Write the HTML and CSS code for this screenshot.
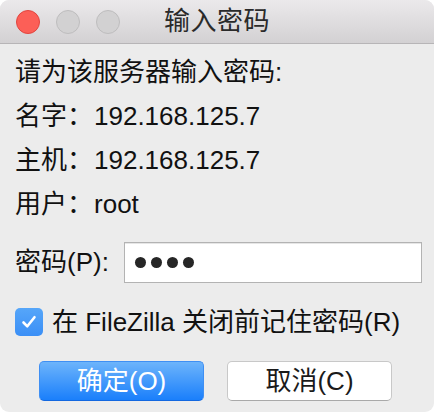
FILE: index.html
```html
<!DOCTYPE html>
<html lang="zh-CN">
<head>
<meta charset="utf-8">
<title>输入密码</title>
<link rel="stylesheet" href="styles.css">
</head>
<body>
<div class="window">
  <div class="titlebar">
    <div class="lights">
      <span class="light close"></span>
      <span class="light idle"></span>
      <span class="light idle"></span>
    </div>
    <div class="title">输入密码</div>
    <div class="spacer"></div>
  </div>
  <div class="content">
    <div class="row">请为该服务器输入密码:</div>
    <div class="row">名字：<span class="val">192.168.125.7</span></div>
    <div class="row">主机：<span class="val">192.168.125.7</span></div>
    <div class="row">用户：<span class="val">root</span></div>
    <div class="pwrow">
      <span class="pwlabel">密码(P):</span>
      <div class="input">
        <span class="dot"></span><span class="dot"></span><span class="dot"></span><span class="dot"></span>
      </div>
    </div>
    <div class="checkrow">
      <span class="checkbox">
        <svg width="18" height="18" viewBox="0 0 18 18"><path d="M3.5 9.5 L7.3 13.3 L14.5 4.2" fill="none" stroke="#fff" stroke-width="2.6" stroke-linecap="round" stroke-linejoin="round"/></svg>
      </span>
      <span class="checklabel">在 FileZilla 关闭前记住密码(R)</span>
    </div>
    <div class="buttons">
      <div class="btn primary">确定(O)</div>
      <div class="btn">取消(C)</div>
    </div>
  </div>
</div>
</body>
</html>
```
FILE: styles.css
```css
html, body {
  margin: 0;
  padding: 0;
  background: #ffffff;
}
body {
  font-family: "Liberation Sans", "Noto Sans CJK SC", sans-serif;
  color: #111;
}
.window {
  width: 434px;
  height: 412px;
  background: #ececec;
  border-radius: 9px;
  overflow: hidden;
  box-sizing: border-box;
}
.titlebar {
  height: 43px;
  border-bottom: 1px solid #b7b5b7;
  background: linear-gradient(#ebe9eb, #d3d1d3);
  display: grid;
  grid-template-columns: 1fr auto 1fr;
  align-items: center;
}
.lights {
  display: flex;
  gap: 16px;
  padding-left: 16px;
}
.light {
  width: 24px;
  height: 24px;
  border-radius: 50%;
  box-sizing: border-box;
}
.light.close {
  background: #fc5f57;
  border: 1px solid #e2453f;
}
.light.idle {
  background: #d2d1d2;
  border: 1px solid #bebdbe;
}
.title {
  font-size: 26px;
  color: #2a2a2a;
  line-height: 43px;
  letter-spacing: 0.5px;
}
.content {
  padding: 6px 0 0 15px;
}
.row {
  height: 44px;
  line-height: 44px;
  font-size: 26px;
  white-space: nowrap;
}
.val {
  margin-left: 1px;
}
.pwrow {
  margin-top: 16px;
  height: 41px;
  display: flex;
  align-items: center;
  gap: 15px;
}
.pwlabel {
  font-size: 26px;
  line-height: 41px;
}
.input {
  width: 298px;
  height: 41px;
  box-sizing: border-box;
  background: #fff;
  border: 1px solid #b3b3b3;
  box-shadow: inset 0 1px 0 #e6e6e6;
  display: flex;
  align-items: center;
  gap: 5px;
  padding-left: 10px;
}
.dot {
  width: 11px;
  height: 11px;
  border-radius: 50%;
  background: #262626;
}
.checkrow {
  margin-top: 25px;
  height: 28px;
  display: flex;
  align-items: center;
  gap: 9px;
}
.checkbox {
  width: 28px;
  height: 28px;
  border-radius: 5px;
  background: linear-gradient(#56a6f9, #3b8ff6);
  display: flex;
  align-items: center;
  justify-content: center;
}
.checkbox svg {
  display: block;
}
.checklabel {
  font-size: 26px;
  line-height: 28px;
  white-space: nowrap;
}
.buttons {
  margin-top: 25px;
  padding-left: 24px;
  display: flex;
  gap: 23px;
}
.btn {
  width: 165px;
  height: 40px;
  box-sizing: border-box;
  border-radius: 5px;
  background: #fff;
  border: 1px solid #c8c8c8;
  border-bottom-color: #a9a9a9;
  font-size: 26px;
  line-height: 38px;
  text-align: center;
  color: #1a1a1a;
}
.btn.primary {
  background: linear-gradient(#6db4fb, #1a7ffb);
  border: 1px solid #3f8ff3;
  border-bottom-color: #1368e0;
  color: #fff;
}
```
